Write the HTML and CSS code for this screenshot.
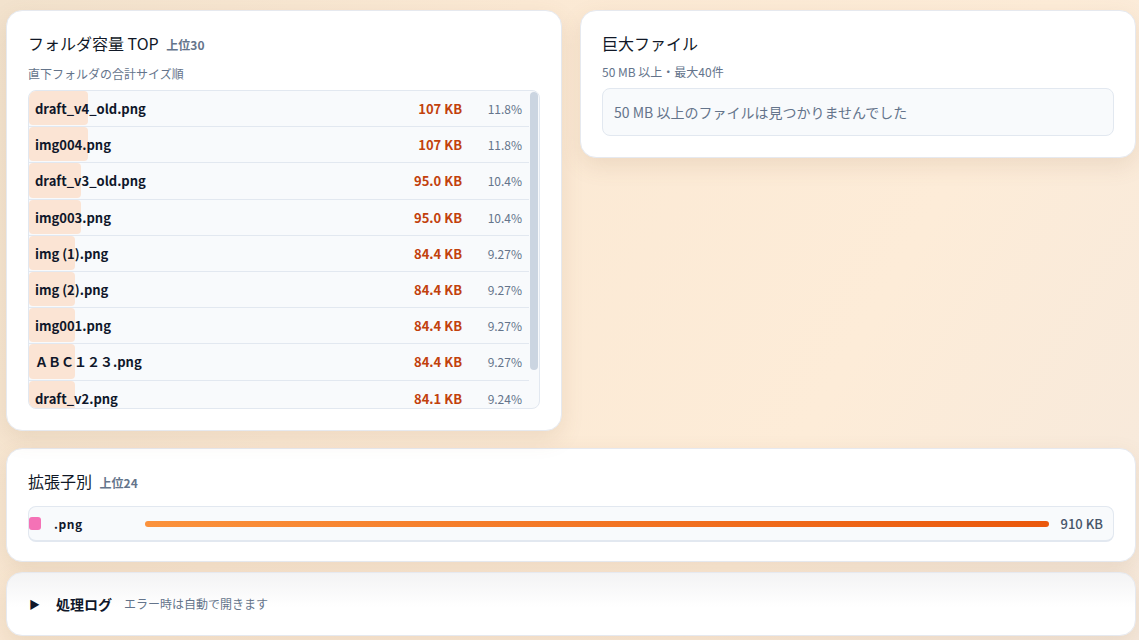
FILE: index.html
```html
<!DOCTYPE html>
<html lang="ja">
<head>
<meta charset="utf-8">
<title>ディスク使用量</title>
<link rel="stylesheet" href="styles.css">
</head>
<body>
<main class="page">
  <div class="top-grid">
    <section class="card">
      <h2 class="card-title">フォルダ容量 TOP <span class="badge">上位30</span></h2>
      <p class="card-sub">直下フォルダの合計サイズ順</p>
      <div class="folder-list">
        <div class="folder-scroll">
          <div class="folder-row"><span class="share" style="width:59px"></span><span class="name">draft_v4_old.png</span><span class="size">107 KB</span><span class="pct">11.8%</span></div>
          <div class="folder-row"><span class="share" style="width:59px"></span><span class="name">img004.png</span><span class="size">107 KB</span><span class="pct">11.8%</span></div>
          <div class="folder-row"><span class="share" style="width:52px"></span><span class="name">draft_v3_old.png</span><span class="size">95.0 KB</span><span class="pct">10.4%</span></div>
          <div class="folder-row"><span class="share" style="width:52px"></span><span class="name">img003.png</span><span class="size">95.0 KB</span><span class="pct">10.4%</span></div>
          <div class="folder-row"><span class="share" style="width:46px"></span><span class="name">img (1).png</span><span class="size">84.4 KB</span><span class="pct">9.27%</span></div>
          <div class="folder-row"><span class="share" style="width:46px"></span><span class="name">img (2).png</span><span class="size">84.4 KB</span><span class="pct">9.27%</span></div>
          <div class="folder-row"><span class="share" style="width:46px"></span><span class="name">img001.png</span><span class="size">84.4 KB</span><span class="pct">9.27%</span></div>
          <div class="folder-row"><span class="share" style="width:46px"></span><span class="name">ＡＢＣ１２３.png</span><span class="size">84.4 KB</span><span class="pct">9.27%</span></div>
          <div class="folder-row"><span class="share" style="width:46px"></span><span class="name">draft_v2.png</span><span class="size">84.1 KB</span><span class="pct">9.24%</span></div>
          <div class="folder-row"><span class="share" style="width:46px"></span><span class="name">img002.png</span><span class="size">84.0 KB</span><span class="pct">9.23%</span></div>
        </div>
        <span class="scroll-thumb"></span>
      </div>
    </section>

    <section class="card">
      <h2 class="card-title">巨大ファイル</h2>
      <p class="card-sub">50 MB 以上・最大40件</p>
      <div class="empty-box">50 MB 以上のファイルは見つかりませんでした</div>
    </section>
  </div>

  <section class="card ext-card">
    <h2 class="card-title">拡張子別 <span class="badge">上位24</span></h2>
    <div class="ext-list">
      <div class="ext-row">
        <span class="swatch"></span>
        <span class="ext-name">.png</span>
        <span class="ext-track"><span class="ext-bar" style="width:100%"></span></span>
        <span class="ext-size">910 KB</span>
      </div>
    </div>
  </section>

  <details class="card log-card">
    <summary class="log-summary"><span class="caret">▶</span><span class="log-title">処理ログ</span><span class="log-note">エラー時は自動で開きます</span></summary>
  </details>
</main>
</body>
</html>
```

FILE: styles.css
```css
* {
  box-sizing: border-box;
}

html, body {
  margin: 0;
  height: 100%;
}

body {
  font-family: "Noto Sans CJK JP", "Noto Sans", sans-serif;
  color: #0f172a;
  background: linear-gradient(120deg, #f2e2cd 0%, #fbe9d4 35%, #fdecd8 70%, #f6e9dc 100%);
  overflow: hidden;
}

.page {
  padding: 10px 3px 0 6px;
}

.top-grid {
  display: grid;
  grid-template-columns: 1fr 1fr;
  gap: 18px;
  align-items: start;
}

.card {
  background: #ffffff;
  border: 1px solid #e6e9ef;
  border-radius: 16px;
  padding: 20px 21px 21px;
  box-shadow: 0 8px 22px rgba(140, 100, 60, 0.13);
}

.card-title {
  margin: 0;
  font-size: 16px;
  font-weight: 400;
  line-height: 24px;
  color: #111827;
}

.badge {
  margin-left: 4px;
  font-size: 12px;
  font-weight: 700;
  color: #64748b;
}

.card-sub {
  margin: 8px 0 7px;
  font-size: 12px;
  line-height: 18px;
  color: #64748b;
}

/* folder ranking list */
.folder-list {
  position: relative;
  height: 319px;
  background: #f8fafc;
  border: 1px solid #e2e8f0;
  border-radius: 8px;
  overflow: hidden;
}

.folder-scroll {
  height: 100%;
  padding-right: 10px;
  overflow: hidden;
}

.scroll-thumb {
  position: absolute;
  top: 1px;
  right: 1px;
  width: 8px;
  height: 278px;
  border-radius: 4px;
  background: #cbd5e1;
}

.folder-row {
  position: relative;
  display: grid;
  grid-template-columns: 1fr auto 52px;
  column-gap: 8px;
  align-items: center;
  height: 36.2px;
  padding: 0 7px 0 6px;
  border-bottom: 1px solid #e2e8f0;
}

.share {
  position: absolute;
  left: 0;
  top: 0;
  bottom: 1px;
  background: #fbe4d4;
  border-radius: 4px;
}

.name {
  position: relative;
  font-size: 13px;
  font-weight: 700;
  color: #0f172a;
  white-space: nowrap;
}

.size {
  position: relative;
  font-size: 13px;
  font-weight: 700;
  color: #c2410c;
  text-align: right;
}

.pct {
  position: relative;
  font-size: 12px;
  color: #64748b;
  text-align: right;
}

.empty-box {
  margin-top: 2px;
  background: #f8fafc;
  border: 1px solid #e2e8f0;
  border-radius: 8px;
  padding: 12px 11px;
  font-size: 14px;
  line-height: 22px;
  color: #64748b;
}

/* extension breakdown */
.ext-card {
  margin-top: 17px;
  padding-bottom: 19px;
}

.ext-list {
  margin-top: 11px;
  background: #f8fafc;
  border: 1px solid #e2e8f0;
  border-bottom-width: 2px;
  border-radius: 8px;
}

.ext-row {
  display: flex;
  align-items: center;
  height: 33px;
  padding-right: 10px;
}

.swatch {
  width: 12px;
  height: 13px;
  border-radius: 3px;
  background: #f472b6;
  flex: none;
}

.ext-name {
  width: 80px;
  margin-left: 13px;
  font-size: 12px;
  font-weight: 700;
  letter-spacing: 0.6px;
  color: #0f172a;
  flex: none;
}

.ext-track {
  flex: 1;
  height: 6px;
  margin: 0 12px 0 11px;
}

.ext-bar {
  display: block;
  height: 100%;
  border-radius: 3px;
  background: linear-gradient(90deg, #fb923c, #ea580c);
}

.ext-size {
  font-size: 13px;
  font-weight: 500;
  color: #475569;
  flex: none;
}

/* collapsible log */
.log-card {
  margin-top: 10px;
  padding: 20px 21px;
  background: linear-gradient(180deg, #f3f3f4 0%, #ffffff 55%);
}

.log-summary {
  display: flex;
  align-items: center;
  list-style: none;
  cursor: pointer;
  line-height: 22px;
}

.log-summary::-webkit-details-marker {
  display: none;
}

.caret {
  width: 28px;
  font-size: 11px;
  color: #0f172a;
  padding-left: 1px;
}

.log-title {
  font-size: 14px;
  font-weight: 700;
  color: #0f172a;
  margin-right: 12px;
}

.log-note {
  font-size: 12px;
  color: #64748b;
}
```
